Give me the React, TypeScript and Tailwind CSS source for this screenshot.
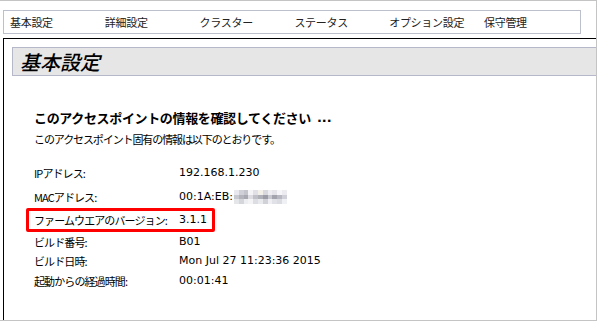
import React from 'react';

const jp = '[font-family:"Noto_Sans_CJK_JP","DejaVu_Sans",sans-serif]';
const lat = '[font-family:"DejaVu_Sans","Noto_Sans_CJK_JP",sans-serif]';

const navItems = ['基本設定', '詳細設定', 'クラスター', 'ステータス', 'オプション設定', '保守管理'];

// pixelated blur over the rest of the MAC address
const blurRows = [
  ['bg-[#e8e8ee]', 'bg-[#d0d0d8]', 'bg-[#c4c4cc]', 'bg-[#f4f4f6]', 'bg-[#e0e0e6]', 'bg-[#f2f0e8]', 'bg-[#d8d8de]', 'bg-[#eeeef2]', 'bg-[#e4e4ea]', 'bg-[#f6f6f8]', 'bg-[#ececf0]'],
  ['bg-[#c8c8d0]', 'bg-[#b4b4bc]', 'bg-[#a8a8b2]', 'bg-[#dcdce2]', 'bg-[#c0c0c8]', 'bg-[#b0b0b8]', 'bg-[#9c9ca6]', 'bg-[#c8c8d0]', 'bg-[#a4a4ae]', 'bg-[#b8b8c2]', 'bg-[#d0d0d8]'],
  ['bg-[#e4e6ea]', 'bg-[#d4d6dc]', 'bg-[#eceef2]', 'bg-[#f4f4f6]', 'bg-[#dcdee4]', 'bg-[#e8eaee]', 'bg-[#d0d2d8]', 'bg-[#f0f0f4]', 'bg-[#e0e2e8]', 'bg-[#dadce2]', 'bg-[#eef0f4]'],
];

const MacBlur = () => (
  <span className="inline-flex flex-col ml-[1px]">
    {blurRows.map((row, r) => (
      <span key={r} className="flex">
        {row.map((c, i) => (
          <span key={i} className={`w-[4.8px] h-[4.4px] ${c}`} />
        ))}
      </span>
    ))}
  </span>
);

const Row: React.FC<{ label: string; h: string; children: React.ReactNode; highlight?: boolean }> = ({ label, h, children, highlight }) => (
  <div className={`relative flex items-center ${h}`}>
    {highlight && (
      <div className="absolute left-[-8px] top-[-1px] w-[189px] h-[24px] border-[3px] border-[#ff0000] rounded-[2px]" />
    )}
    <div className={`w-[145px] text-[11px] tracking-[-0.9px] text-black ${jp}`}>{label}</div>
    <div className={`text-[11px] text-black flex items-center ${lat}`}>{children}</div>
  </div>
);

const App: React.FC = () => {
  return (
    <div className="w-[600px] h-[335px] bg-white">
      <div className="w-[597px] h-[321px] border-t border-r border-b border-[#c4c4c4] flex flex-col">
        <div className="pl-[3px] pr-[15px] pt-[9px]">
          <div className="h-[24px] border border-[#bcc0cc] flex items-center pl-[6px]">
            {navItems.map((n) => (
              <div key={n} className={`w-[94.8px] text-[11px] tracking-[-0.3px] text-[#222] ${jp}`}>
                {n}
              </div>
            ))}
          </div>
        </div>

        <div className="flex-1 mt-[4px] ml-[3px] border-t border-l border-black">
          <div className="ml-[8px] mt-[8px] h-[29px] bg-[#e6e6e6] border-t border-l border-b border-[#b4b8c8] flex items-center pl-[7px]">
            <span className={`text-[20px] italic font-medium text-black leading-none ${jp}`}>基本設定</span>
          </div>

          <div className="pl-[30px]">
            <div className={`mt-[33px] h-[18px] flex items-center text-[13px] font-bold tracking-[-0.35px] text-black ${jp}`}>
              このアクセスポイントの情報を確認してください<span className={`ml-[6px] ${lat} tracking-normal`}>...</span>
            </div>
            <div className={`mt-[4px] h-[16px] flex items-center text-[11px] tracking-[-1.1px] text-black ${jp}`}>
              このアクセスポイント固有の情報は以下のとおりです。
            </div>

            <div className="mt-[14px]">
              <Row label="IPアドレス:" h="h-[24px]">192.168.1.230</Row>
              <Row label="MACアドレス:" h="h-[24px]">
                00:1A:EB:<MacBlur />
              </Row>
              <Row label="ファームウエアのバージョン:" h="h-[23px]" highlight>
                3.1.1
              </Row>
              <Row label="ビルド番号:" h="h-[20px]">B01</Row>
              <Row label="ビルド日時:" h="h-[19px]">Mon Jul 27 11:23:36 2015</Row>
              <Row label="起動からの経過時間:" h="h-[20px]">00:01:41</Row>
            </div>
          </div>
        </div>
      </div>
    </div>
  );
};

export default App;
